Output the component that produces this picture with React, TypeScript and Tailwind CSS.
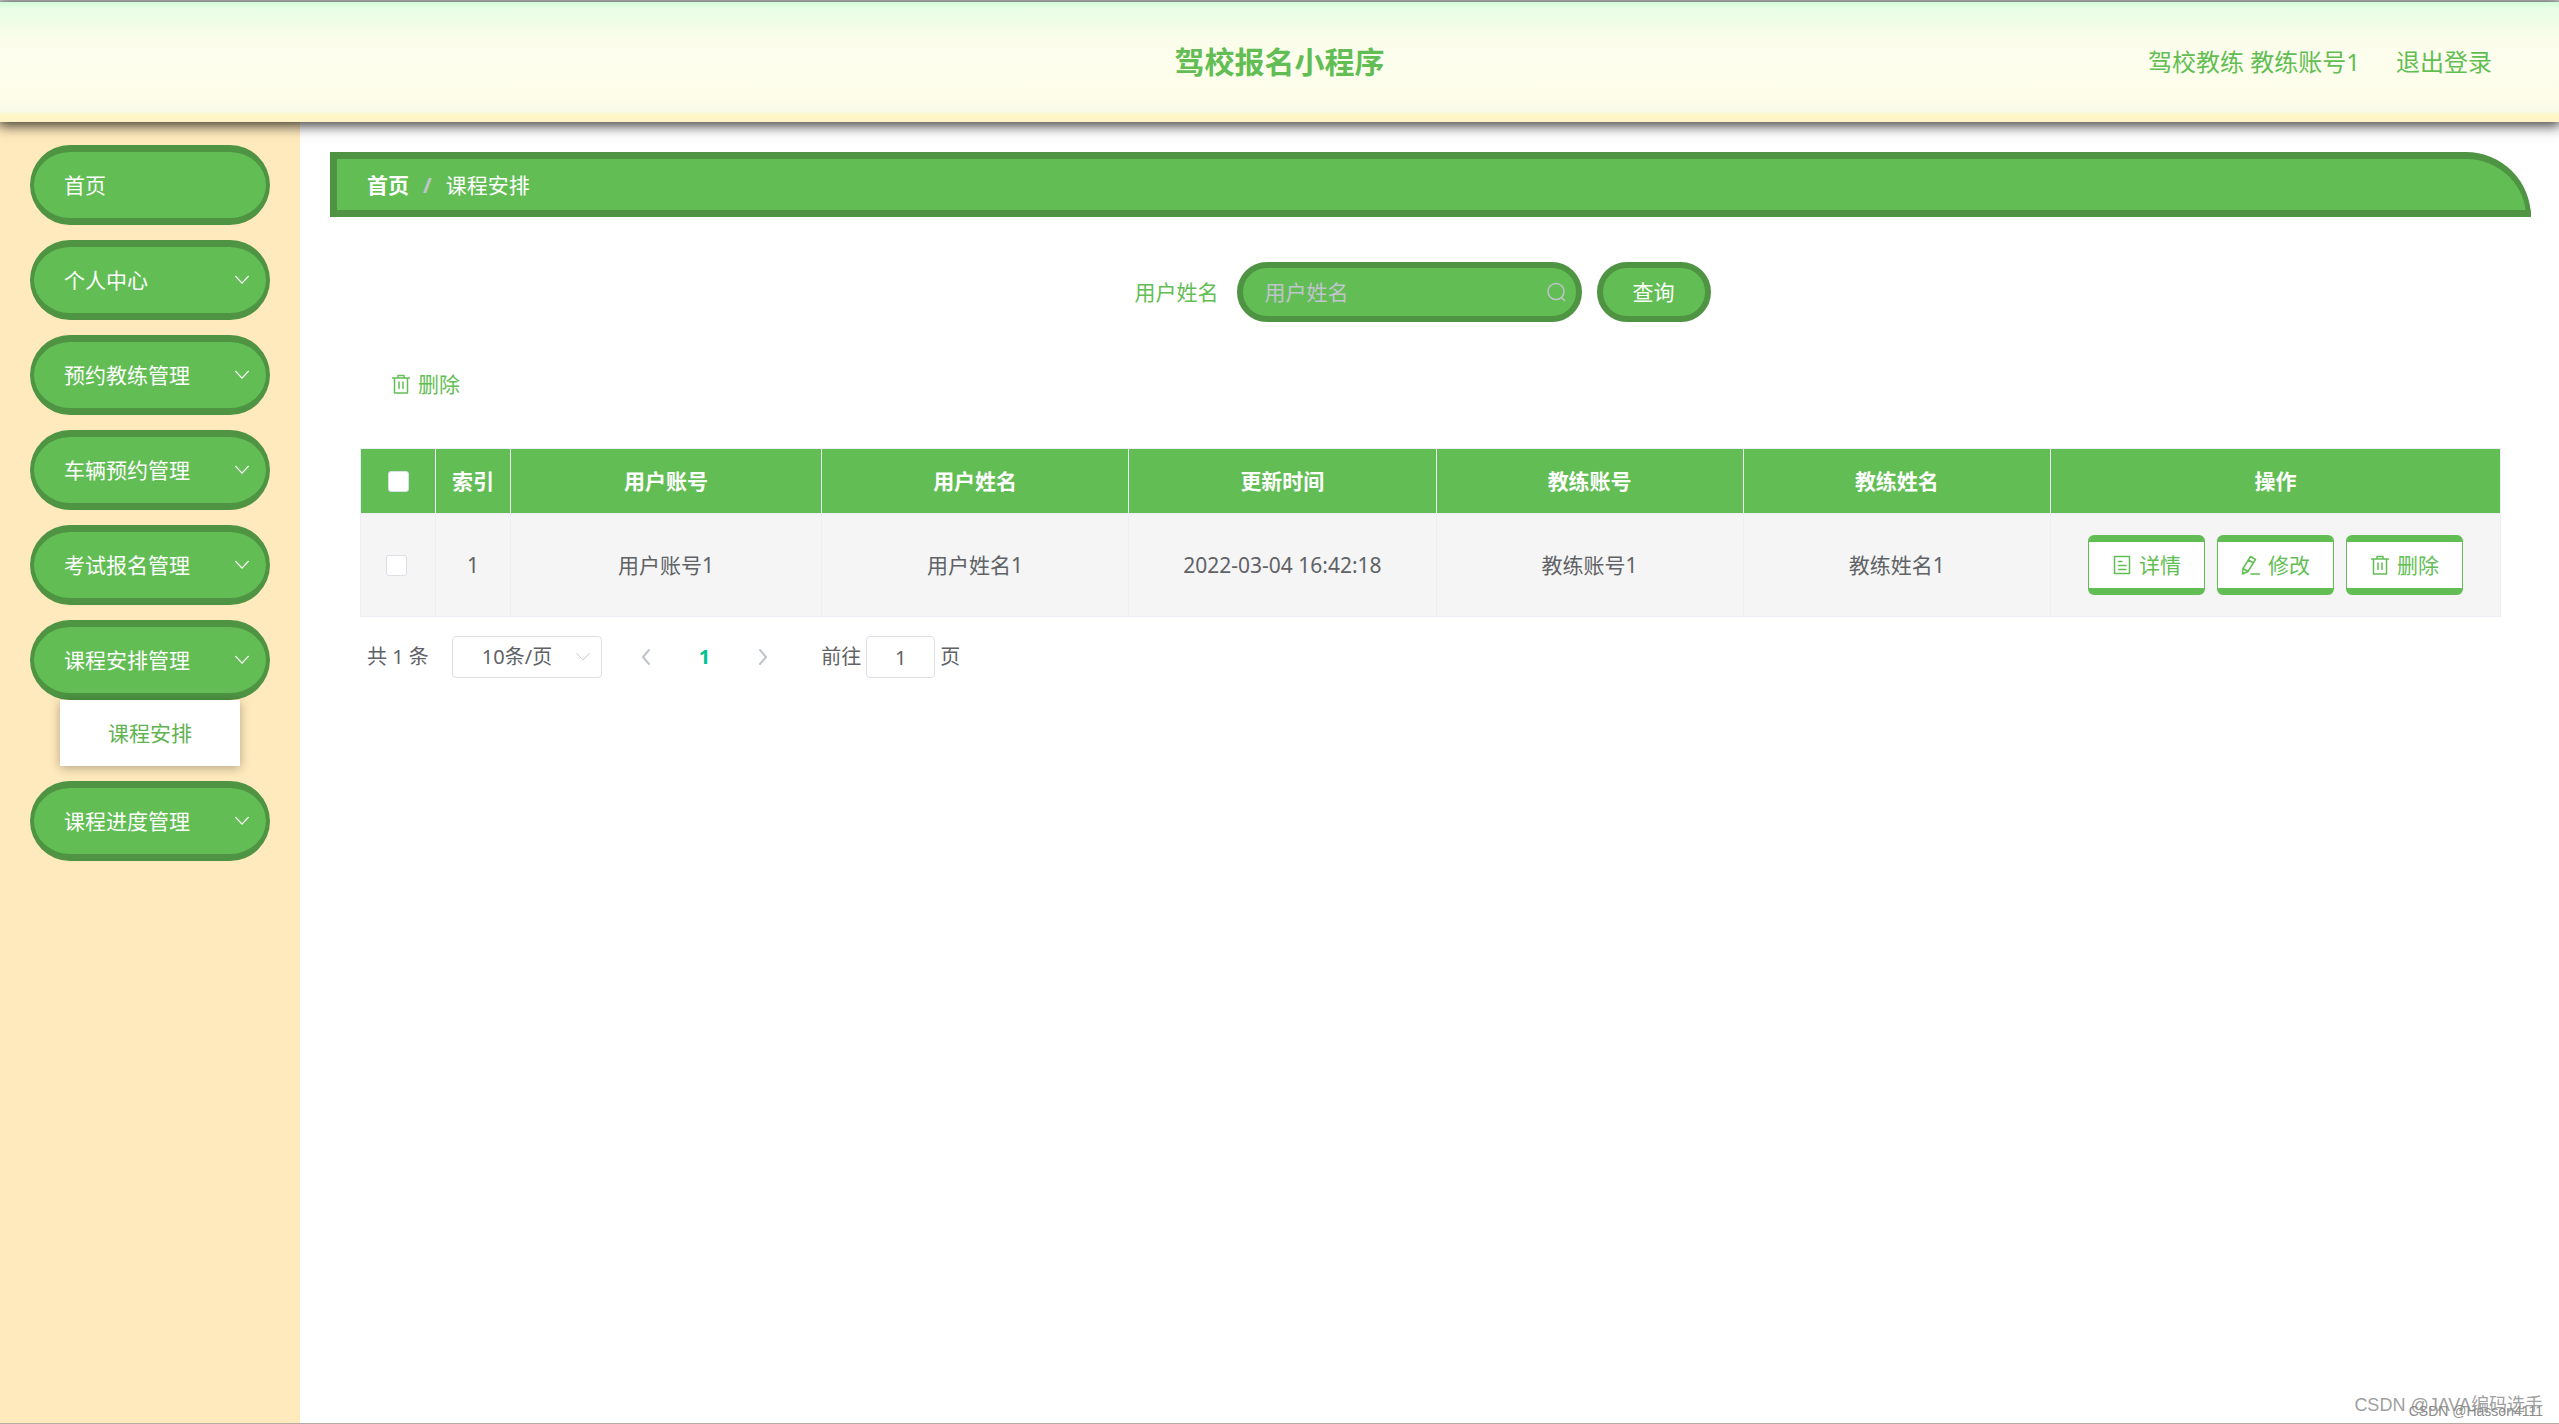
import React from "react";

const menu = [
  { label: "首页", sub: [] as string[] },
  { label: "个人中心", more: true },
  { label: "预约教练管理", more: true },
  { label: "车辆预约管理", more: true },
  { label: "考试报名管理", more: true },
  { label: "课程安排管理", more: true, sub: ["课程安排"] },
  { label: "课程进度管理", more: true },
];

const columns = ["用户账号", "用户姓名", "更新时间", "教练账号", "教练姓名"];
const row = ["用户账号1", "用户姓名1", "2022-03-04 16:42:18", "教练账号1", "教练姓名1"];

type IconProps = { className?: string };

function Glyph({ d, className }: { d: string } & IconProps) {
  return (
    <svg viewBox="0 0 20 20" fill="none" stroke="currentColor" strokeLinecap="round" strokeLinejoin="round" className={className} aria-hidden="true">
      <path d={d} />
    </svg>
  );
}

const Down = ({ className }: IconProps) => <Glyph className={className} d="M3 6l7 7.500 7-7.500" />;
const Left = ({ className }: IconProps) => <Glyph className={className} d="M13 3l-6 7 6 7" />;
const Right = ({ className }: IconProps) => <Glyph className={className} d="M7 3l6 7-6 7" />;
const Search = ({ className }: IconProps) => (
  <Glyph className={className} d="M18 9.500a8 8 0 1 1-16 0a8 8 0 1 1 16 0M15.500 15.500l3 3" />
);
const Trash = ({ className }: IconProps) => (
  <Glyph className={className} d="M1.500 4h17M3.500 4v15h13V4M7 4V1.500h6V4M8 8v6.500M12 8v6.500" />
);
const Doc = ({ className }: IconProps) => (
  <Glyph className={className} d="M2.500 1.500h15v17h-15zM6.500 6.500h3.500M6.500 10.500h7.500M6.500 14.500h7.500" />
);
const Pen = ({ className }: IconProps) => (
  <Glyph className={className} d="M9.500 1.500l5 3-7.500 12-5.500 2.500.500-5.500zM7.500 5l5 3M2 13.500l5 3M10 19h8.500" />
);

function Check({ label }: { label: string }) {
  return (
    <input
      type="checkbox"
      aria-label={label}
      className="block size-[21px] appearance-none rounded-[3px] border border-[#dcdfe6] bg-white checked:bg-[#00c292]"
    />
  );
}

function Action({ icon: Icon, label }: { icon: React.FC<IconProps>; label: string }) {
  return (
    <button className="flex h-[60px] w-[117px] items-center justify-center gap-[7px] rounded-md border-x border-y-7 border-[#62be54] bg-white text-[#62be54]">
      <Icon className="size-5 stroke-[1.500]" />
      {label}
    </button>
  );
}

export default function App() {
  return (
    <div className="relative flex min-h-screen flex-col border-t-2 border-b border-t-[#dcdddd] border-b-[#b5aca3] bg-white font-['Noto_Sans','Noto_Sans_CJK_SC',sans-serif] text-[21px] leading-8 text-[#606266]">
      <header className="relative z-10 grid h-[120px] grid-cols-3 items-center bg-[linear-gradient(to_bottom,#cffcd8_0%,#e9fde6_5%,#effde6_17%,#fafde9_30%,#fefeee_45%,#fdfdea_80%,#f9fae8_91%,#fef7c9_94%,#fef3c4_100%)] px-[67px] text-2xl text-[#62be54] shadow-[0_2px_12px_2px_rgba(0,0,0,0.75)]">
        <h1 className="col-start-2 text-center text-3xl font-bold">驾校报名小程序</h1>
        <div className="flex justify-end gap-9">
          <span>驾校教练 教练账号1</span>
          <button>退出登录</button>
        </div>
      </header>

      <div className="flex flex-1">
        <nav className="w-[300px] shrink-0 bg-[#ffeabd] px-[30px] pt-[23px]">
          <ul className="flex flex-col gap-[15px]">
            {menu.map((m) => (
              <li key={m.label}>
                <button className="flex h-20 w-full items-center justify-between rounded-[40px] border-x-4 border-y-7 border-[#4e9443] bg-[#62be54] pr-[15px] pl-[30px] text-white">
                  {m.label}
                  {m.more && <Down className="size-[18px] stroke-[1.500]" />}
                </button>
                {m.sub?.map((s) => (
                  <a key={s} href="#" className="mx-[30px] flex h-[66px] items-center justify-center bg-white text-[#5fb352] shadow-[0_2px_10px_rgba(0,0,0,0.3)]">
                    {s}
                  </a>
                ))}
              </li>
            ))}
          </ul>
        </nav>

        <main className="flex min-w-0 flex-1 flex-col pt-[30px] pr-7 pl-[30px]">
          <div className="flex h-[65px] items-center gap-[14px] rounded-tr-[65px] border-y-7 border-r-5 border-l-7 border-[#4e9443] bg-[#62be54] px-[30px] text-white">
            <a href="#" className="font-bold">首页</a>
            <span className="font-bold text-[#c0c4cc]">/</span>
            <span>课程安排</span>
          </div>

          <div className="flex flex-col px-[30px]">
            <form className="mt-[45px] flex items-center justify-center pr-4" onSubmit={(e) => e.preventDefault()}>
              <label htmlFor="name" className="mr-[18px] text-[#62be54]">用户姓名</label>
              <div className="relative mr-[15px]">
                <input
                  id="name"
                  placeholder="用户姓名"
                  className="h-[60px] w-[345px] rounded-[30px] border-6 border-[#4e9443] bg-[#62be54] pr-12 pl-[22px] text-white outline-none placeholder:text-[#c0c4cc]"
                />
                <Search className="absolute top-[20px] right-[16px] size-5 stroke-[1.500] text-[#c0c4cc]" />
              </div>
              <button className="h-[60px] w-[114px] rounded-[30px] border-6 border-[#4e9443] bg-[#62be54] text-white">查询</button>
            </form>

            <button className="mt-[46px] ml-[31px] flex items-center gap-[7px] self-start text-[#62be54]">
              <Trash className="size-5 stroke-[1.500]" />
              删除
            </button>

            <table className="mt-12 w-full table-fixed border-collapse text-center">
              <colgroup>
                <col className="w-[75px]" />
                <col className="w-[75px]" />
                <col className="w-[311px]" />
                <col />
                <col />
                <col />
                <col />
                <col className="w-[450px]" />
              </colgroup>
              <thead>
                <tr className="h-[65px] bg-[#62be54] text-white">
                  <th className="border border-[#ebeef5] p-0">
                    <div className="flex justify-center"><Check label="全选" /></div>
                  </th>
                  <th className="border border-[#ebeef5] p-0">索引</th>
                  {columns.map((c) => (
                    <th key={c} className="border border-[#ebeef5] p-0">{c}</th>
                  ))}
                  <th className="border border-[#ebeef5] p-0">操作</th>
                </tr>
              </thead>
              <tbody>
                <tr className="h-[103px] bg-[#f5f5f5]">
                  <td className="border border-[#ebeef5] p-0 pr-1">
                    <div className="flex justify-center"><Check label="选择第1行" /></div>
                  </td>
                  <td className="border border-[#ebeef5] p-0">1</td>
                  {row.map((c) => (
                    <td key={c} className="border border-[#ebeef5] p-0">{c}</td>
                  ))}
                  <td className="border border-[#ebeef5] p-0">
                    <div className="flex justify-center gap-3">
                      <Action icon={Doc} label="详情" />
                      <Action icon={Pen} label="修改" />
                      <Action icon={Trash} label="删除" />
                    </div>
                  </td>
                </tr>
              </tbody>
            </table>

            <div className="mt-[19px] flex h-[42px] items-center pl-[7px] text-xl">
              <span>共 1 条</span>
              <div className="relative ml-[23px]">
                <select aria-label="每页条数" className="h-[42px] w-[150px] appearance-none rounded-sm border border-[#dcdfe6] bg-white pl-[29px]">
                  <option>10条/页</option>
                </select>
                <Down className="pointer-events-none absolute top-[12px] right-[10px] size-[18px] text-[#c0c4cc]" />
              </div>
              <button aria-label="上一页" className="ml-[34px] text-[#c0c4cc]"><Left className="size-5 stroke-2" /></button>
              <button className="ml-[43px] font-bold text-[#00c292]">1</button>
              <button aria-label="下一页" className="ml-[43px] text-[#c0c4cc]"><Right className="size-5 stroke-2" /></button>
              <label htmlFor="page" className="ml-12">前往</label>
              <input id="page" defaultValue="1" className="mx-[5px] h-[42px] w-[69px] rounded-sm border border-[#dcdfe6] bg-white text-center" />
              <span>页</span>
            </div>
          </div>
        </main>
      </div>

      <div className="pointer-events-none absolute right-4 bottom-1 grid items-end justify-items-end font-['Liberation_Sans','Noto_Sans_CJK_SC',sans-serif] whitespace-nowrap text-[#a0a0a0]">
        <span className="col-start-1 row-start-1 text-lg leading-7">CSDN @JAVA编码选手</span>
        <span className="col-start-1 row-start-1 text-sm leading-4 text-[#8a8a8a]">CSDN @Hasson4111</span>
      </div>
    </div>
  );
}
